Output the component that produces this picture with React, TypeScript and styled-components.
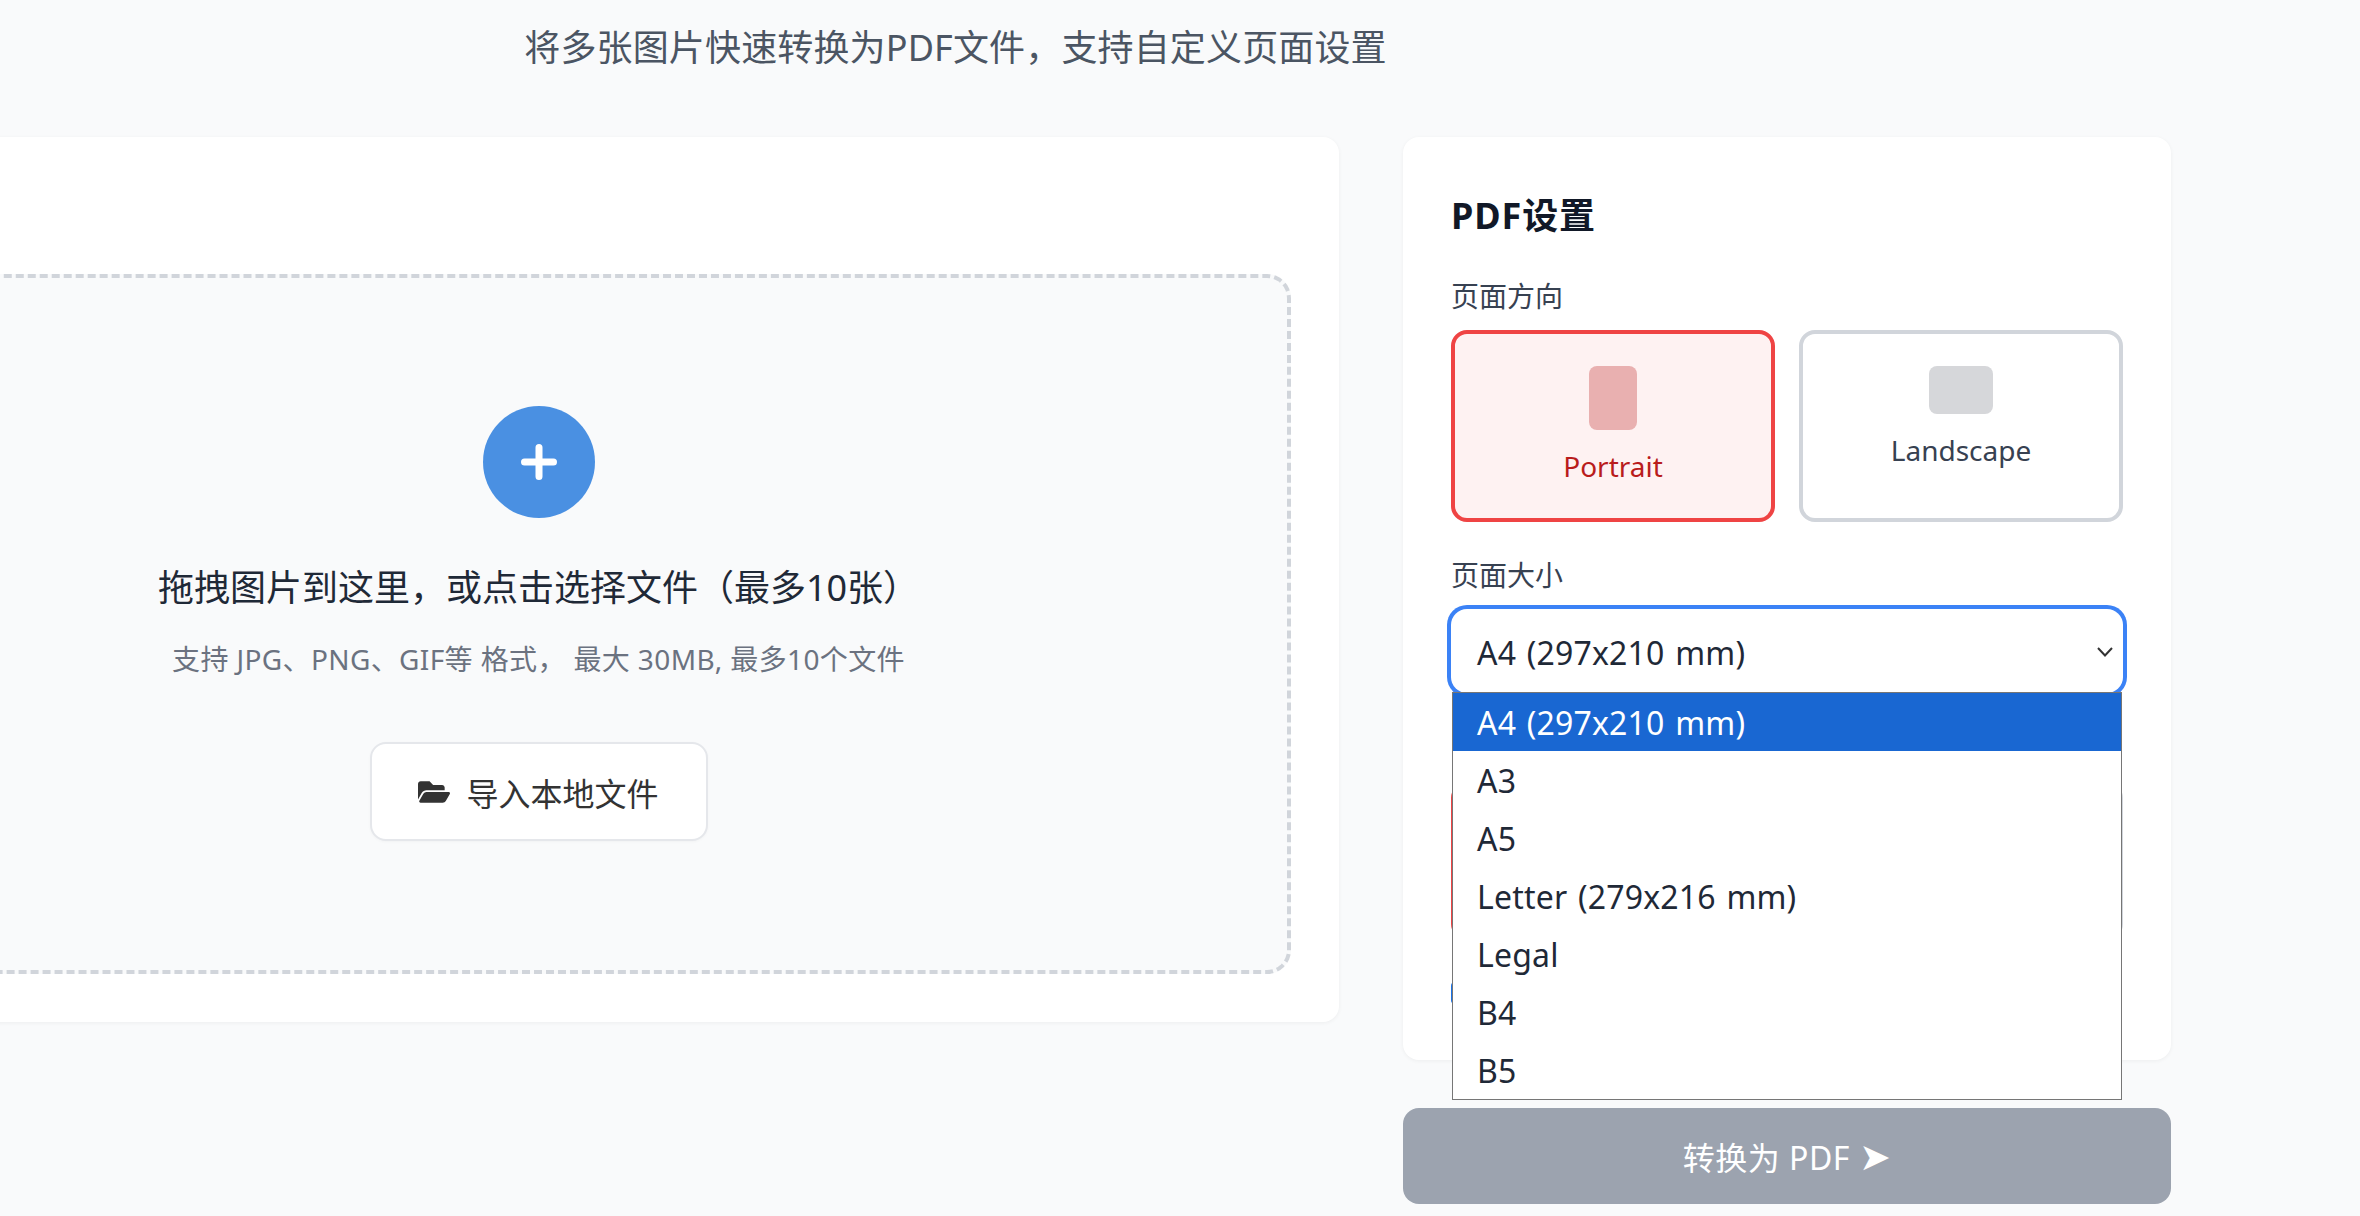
import React from 'react';
import styled, { createGlobalStyle } from 'styled-components';
import { FaFolderOpen } from 'react-icons/fa';

const Global = createGlobalStyle`
  html, body { margin: 0; padding: 0; height: 1216px; overflow: hidden; background: #f9fafb; }
  body { font-family: "Noto Sans", "Noto Sans CJK SC", sans-serif; }
  * { box-sizing: border-box; }
`;

const Page = styled.div`
  width: 2431px;
  margin-left: -260px;
  padding-top: 21px;
`;

const Subtitle = styled.p`
  margin: 0 0 62px;
  font-size: 36px;
  line-height: 54px;
  letter-spacing: 0.15px;
  text-align: center;
  color: #4b5563;
`;

const Columns = styled.div`
  display: grid;
  grid-template-columns: 1599px 768px;
  gap: 64px;
  align-items: start;
`;

const Card = styled.section`
  background: #fff;
  border-radius: 16px;
  box-shadow: 0 1px 4px rgba(0, 0, 0, 0.05);
`;

const UploadCard = styled(Card)`
  padding: 137px 48px 48px;
`;

const DropZone = styled.div`
  height: 700px;
  padding: 128px 2px 0 0;
  display: flex;
  flex-direction: column;
  align-items: center;
  background: #f9fafb;
  border: 4px dashed #d1d5db;
  border-radius: 24px;
`;

const AddCircle = styled.div`
  width: 112px;
  height: 112px;
  flex: none;
  border-radius: 50%;
  background: #4a90e2;
  display: flex;
  align-items: center;
  justify-content: center;
`;

const DropTitle = styled.div`
  margin-top: 43px;
  font-size: 36px;
  line-height: 54px;
  color: #1f2937;
`;

const DropHint = styled.div`
  margin-top: 24px;
  font-size: 28px;
  line-height: 40px;
  letter-spacing: 0.38px;
  color: #6b7280;
`;

const ImportButton = styled.button`
  margin-top: 63px;
  width: 338px;
  height: 99px;
  display: flex;
  align-items: center;
  justify-content: center;
  gap: 16px;
  background: #fff;
  border: 2px solid #e5e7eb;
  border-radius: 16px;
  box-shadow: 0 1px 3px rgba(0, 0, 0, 0.03);
  font: inherit;
  font-size: 32px;
  color: #333;
  svg { width: 32px; height: 32px; flex: none; }
`;

const SideColumn = styled.div`
  display: flex;
  flex-direction: column;
  gap: 48px;
`;

const SettingsCard = styled(Card)`
  position: relative;
  padding: 48px 48px 56px;
`;

const SettingsTitle = styled.h2`
  margin: 0 0 29px;
  font-size: 36px;
  line-height: 62px;
  font-weight: 700;
  letter-spacing: 0.9px;
  color: #111827;
`;

const FieldLabel = styled.div<{ $gapTop?: number }>`
  margin-top: ${p => p.$gapTop ?? 0}px;
  margin-bottom: 14px;
  font-size: 28px;
  line-height: 40px;
  color: #374151;
`;

const OptionGrid = styled.div<{ $gapTop?: number }>`
  margin-top: ${p => p.$gapTop ?? 0}px;
  display: grid;
  grid-template-columns: 1fr 1fr;
  gap: 24px;
`;

const Option = styled.div<{ $active?: boolean }>`
  height: 192px;
  padding: 32px 16px;
  display: flex;
  flex-direction: column;
  align-items: center;
  gap: 16px;
  border: 4px solid ${p => (p.$active ? '#ef4444' : '#d1d5db')};
  border-radius: 16px;
  background: ${p => (p.$active ? '#fef2f2' : '#fff')};
  color: ${p => (p.$active ? '#b91c1c' : '#374151')};
  font-size: 28px;
  line-height: 40px;
`;

const BlankOption = styled(Option)`
  height: 158px;
`;

const PageShape = styled.div<{ $w: number; $h: number; $active?: boolean }>`
  width: ${p => p.$w}px;
  height: ${p => p.$h}px;
  border-radius: 8px;
  background: ${p => (p.$active ? '#e9b0b0' : '#d6d7da')};
`;

const SelectBox = styled.div`
  height: 84px;
  margin-top: 1px;
  padding: 2px 26px 0;
  display: flex;
  align-items: center;
  justify-content: space-between;
  background: #fff;
  border-radius: 16px;
  box-shadow: 0 0 0 4px #3b82f6;
  font-size: 32px;
  letter-spacing: 0.2px;
  word-spacing: 2px;
  color: #1f2937;
  svg { margin-right: -16px; }
`;

const CheckMark = styled.div`
  width: 24px;
  height: 22px;
  margin-top: 42px;
  border-radius: 4px;
  background: #1a73e8;
`;

const DropList = styled.ul`
  position: absolute;
  left: 49px;
  right: 49px;
  top: 555px;
  margin: 0;
  padding: 0;
  list-style: none;
  background: #fff;
  border: 1px solid #767676;
  font-size: 32px;
  letter-spacing: 0.2px;
  word-spacing: 2px;
  color: #1f2937;
`;

const DropItem = styled.li<{ $selected?: boolean }>`
  height: 58px;
  padding-left: 24px;
  display: flex;
  align-items: center;
  background: ${p => (p.$selected ? '#1967d2' : 'transparent')};
  color: ${p => (p.$selected ? '#fff' : 'inherit')};
`;

const ConvertButton = styled.button`
  height: 96px;
  border: 0;
  border-radius: 16px;
  background: #9ca3af;
  color: #fff;
  font: inherit;
  font-size: 32px;
  letter-spacing: 0.5px;
`;

const ArrowGlyph = styled.span`
  font-size: 38px;
  line-height: 1;
`;

const Footer = styled.h3`
  margin: 4px 0 0;
  padding-right: 50px;
  font-size: 36px;
  line-height: 54px;
  font-weight: 400;
  text-align: center;
  color: #374151;
`;

const sizes = ['A4 (297x210 mm)', 'A3', 'A5', 'Letter (279x216 mm)', 'Legal', 'B4', 'B5'];

export default function App() {
  return (
    <Page>
      <Global />
      <Subtitle>将多张图片快速转换为PDF文件，支持自定义页面设置</Subtitle>
      <Columns>
        <UploadCard>
          <DropZone>
            <AddCircle>
              <svg width="36" height="36" viewBox="0 0 36 36" fill="none" stroke="#fff" strokeWidth="7" strokeLinecap="round">
                <path d="M18 3.5V32.5M3.5 18H32.5" />
              </svg>
            </AddCircle>
            <DropTitle>拖拽图片到这里，或点击选择文件（最多10张）</DropTitle>
            <DropHint>支持 JPG、PNG、GIF等 格式， 最大 30MB, 最多10个文件</DropHint>
            <ImportButton>
              <FaFolderOpen />
              导入本地文件
            </ImportButton>
          </DropZone>
        </UploadCard>
        <SideColumn>
          <SettingsCard>
            <SettingsTitle>PDF设置</SettingsTitle>
            <FieldLabel>页面方向</FieldLabel>
            <OptionGrid>
              <Option $active>
                <PageShape $w={48} $h={64} $active />
                Portrait
              </Option>
              <Option>
                <PageShape $w={64} $h={48} />
                Landscape
              </Option>
            </OptionGrid>
            <FieldLabel $gapTop={33}>页面大小</FieldLabel>
            <SelectBox>
              A4 (297x210 mm)
              <svg width="16" height="10" viewBox="0 0 16 10" fill="none" stroke="#333" strokeWidth="2">
                <path d="M1 1L8 8.5L15 1" />
              </svg>
            </SelectBox>
            <OptionGrid $gapTop={89}>
              <BlankOption $active />
              <BlankOption />
            </OptionGrid>
            <CheckMark />
            <DropList>
              {sizes.map((s, i) => (
                <DropItem key={s} $selected={i === 0}>{s}</DropItem>
              ))}
            </DropList>
          </SettingsCard>
          <ConvertButton>转换为 PDF <ArrowGlyph>➤</ArrowGlyph></ConvertButton>
        </SideColumn>
      </Columns>
      <Footer>使用说明</Footer>
    </Page>
  );
}
